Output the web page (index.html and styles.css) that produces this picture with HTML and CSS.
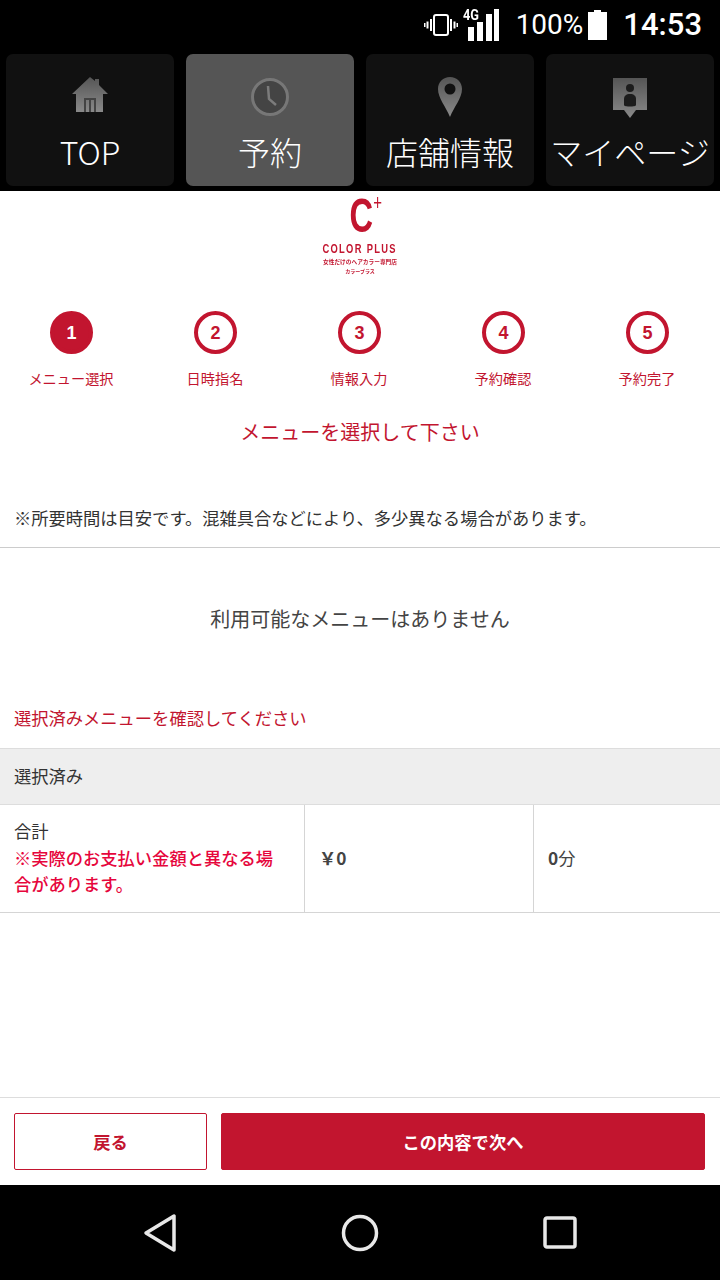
FILE: index.html
```html
<!DOCTYPE HTML>
<html lang="ja">
<head>
    <meta charset="utf-8">
    <title>メニュー選択</title>
    <link rel="stylesheet" href="styles.css">
</head>
<body>

<div class="status">
    <svg class="ic-vibrate" width="34" height="26" viewBox="0 0 34 26">
        <rect x="10" y="3" width="14" height="20" rx="2" fill="none" stroke="#fff" stroke-width="2"/>
        <path d="M7 7v12M3.500 9.500v7M0.500 11v4M27 7v12M30.500 9.500v7M33.500 11v4" stroke="#fff" stroke-width="2" fill="none"/>
    </svg>
    <span class="net">
        <span class="net-label">4G</span>
        <svg width="32" height="32" viewBox="0 0 32 32">
            <path d="M1 32h6V18H1zM10 32h6V13h-6zM19 32h6V5h-6zM27 32h5V0h-5z" fill="#fff"/>
        </svg>
    </span>
    <span class="battery-text">100%</span>
    <svg class="ic-battery" width="19" height="30" viewBox="0 0 19 30">
        <path d="M6 0h7v2h6v28H0V2h6z" fill="#fff"/>
    </svg>
    <span class="clock">14:53</span>
</div>

<nav class="tabs">
    <a class="tab">
        <svg width="38" height="42" viewBox="0 2 38 42">
            <defs>
                <linearGradient id="grey" x1="0" y1="0" x2="0" y2="1">
                    <stop offset="0" stop-color="#555"/>
                    <stop offset="1" stop-color="#8a8a8a"/>
                </linearGradient>
            </defs>
            <path d="M1 20L19 3l5 4V5h4v6l9 9H32v18H5V20z" fill="url(#grey)"/>
            <path d="M13 38V24h12v14h-2V26h-3v12h-2V26h-3v12z" fill="#444"/>
        </svg>
        <span>TOP</span>
    </a>
    <a class="tab is-active">
        <svg width="40" height="42" viewBox="0 0 40 42">
            <circle cx="20" cy="21" r="17.500" fill="#444" stroke="#777" stroke-width="3"/>
            <path d="M18 10l1 13 7 6" fill="none" stroke="#7c7c7c" stroke-width="2.500"/>
        </svg>
        <span>予約</span>
    </a>
    <a class="tab">
        <svg width="26" height="42" viewBox="0 0 26 42">
            <path d="M13 1c7 0 12 5 12 12 0 9-8 18-12 28C9 31 1 22 1 13 1 6 6 1 13 1z" fill="url(#grey)"/>
            <circle cx="13" cy="13" r="5.500" fill="#111"/>
        </svg>
        <span>店舗情報</span>
    </a>
    <a class="tab">
        <svg width="38" height="42" viewBox="0 -2 38 42">
            <path d="M2 0h34v32H25l-6 8-6-8H2z" fill="url(#grey)"/>
            <circle cx="19" cy="10" r="4" fill="#1c1c1c"/>
            <path d="M13 27v-6c0-3 2-5 6-5s6 2 6 5v6c0 2-12 2-12 0z" fill="#1c1c1c"/>
        </svg>
        <span>マイページ</span>
    </a>
</nav>

<main class="page">
    <div class="logo">
        <div class="logo-mark">C<sup>+</sup></div>
        <div class="logo-name">COLOR PLUS</div>
        <div class="logo-sub">女性だけのヘアカラー専門店</div>
        <div class="logo-sub logo-sub-small">カラープラス</div>
    </div>

    <ol class="steps">
        <li class="step is-current"><b>1</b><span>メニュー選択</span></li>
        <li class="step"><b>2</b><span>日時指名</span></li>
        <li class="step"><b>3</b><span>情報入力</span></li>
        <li class="step"><b>4</b><span>予約確認</span></li>
        <li class="step"><b>5</b><span>予約完了</span></li>
    </ol>

    <h1 class="title">メニューを選択して下さい</h1>
    <p class="notice">※所要時間は目安です。混雑具合などにより、多少異なる場合があります。</p>
    <p class="empty">利用可能なメニューはありません</p>
    <p class="confirm">選択済みメニューを確認してください</p>

    <h2 class="selected-head">選択済み</h2>
    <div class="total">
        <div class="total-label">合計<br><em>※実際のお支払い金額と異なる場合があります。</em></div>
        <div class="total-price"><b>￥0</b></div>
        <div class="total-time"><b>0</b>分</div>
    </div>

    <div class="actions">
        <a class="btn btn-back">戻る</a>
        <a class="btn btn-next">この内容で次へ</a>
    </div>
</main>

<div class="softkeys">
    <svg width="36" height="40" viewBox="0 0 36 40">
        <path d="M32 3v34L4 20z" fill="none" stroke="#e8e8e8" stroke-width="3.500" stroke-linejoin="round"/>
    </svg>
    <svg width="38" height="38" viewBox="0 0 38 38">
        <circle cx="19" cy="19" r="16.500" fill="none" stroke="#e8e8e8" stroke-width="3.500"/>
    </svg>
    <svg class="key-recent" width="34" height="33" viewBox="0 0 34 33">
        <rect x="2" y="2" width="30" height="29" rx="2" fill="none" stroke="#e8e8e8" stroke-width="3.500"/>
    </svg>
</div>

</body>
</html>
```

FILE: styles.css
```css
html, body {
    margin: 0;
    padding: 0;
    height: 100%;
}

body {
    display: flex;
    flex-direction: column;
    height: 1280px;
    overflow: hidden;
    background: #000;
    font-family: "Noto Sans CJK JP", "Noto Sans", sans-serif;
    color: #333;
}

/* status bar */
.status {
    height: 54px;
    box-sizing: border-box;
    padding-bottom: 5px;
    display: flex;
    align-items: center;
    justify-content: flex-end;
    padding-right: 18px;
    color: #fff;
    font-family: Roboto, sans-serif;
}
.ic-vibrate {
    margin-right: 5px;
}
.net {
    display: flex;
    align-items: flex-end;
    position: relative;
    width: 36px;
    height: 32px;
    justify-content: flex-end;
    margin-right: 17px;
}
.net-label {
    position: absolute;
    left: 0;
    top: -2px;
    font-size: 15px;
    font-weight: 700;
    line-height: 16px;
    transform: scaleX(0.85);
    transform-origin: left;
}
.battery-text {
    font-size: 28px;
    margin-right: 5px;
}
.ic-battery {
    margin-right: 16px;
}
.clock {
    font-size: 31px;
    font-weight: 500;
}

/* top tabs */
.tabs {
    height: 137px;
    display: flex;
    gap: 12px;
    padding: 0 6px;
    box-sizing: border-box;
}
.tab {
    flex: 1;
    height: 132px;
    background: #111;
    border-radius: 7px;
    display: flex;
    flex-direction: column;
    align-items: center;
    color: #fff;
    font-size: 32px;
    line-height: 40px;
    white-space: nowrap;
}
.tab svg {
    height: 42px;
    margin-top: 22px;
    overflow: visible;
    filter: blur(0.7px);
}
.tab span {
    margin-top: 13px;
    font-family: "Noto Sans CJK JP", sans-serif;
    font-weight: 300;
}
.tab.is-active {
    background: #555;
}

/* page */
.page {
    height: 994px;
    background: #fff;
    display: flex;
    flex-direction: column;
}

.logo {
    height: 96px;
    color: #c2152f;
    text-align: center;
    display: flex;
    flex-direction: column;
    align-items: center;
    filter: blur(0.3px);
}
.logo-mark {
    height: 50px;
    font-family: "Liberation Sans", sans-serif;
    font-weight: 700;
    font-size: 48px;
    line-height: 50px;
    transform: scaleX(0.68);
    margin-left: 12px;
}
.logo-mark sup {
    font-size: 22px;
    line-height: 0;
    vertical-align: 22px;
    font-weight: 400;
}
.logo-name {
    font-family: "Liberation Sans", sans-serif;
    font-weight: 700;
    font-size: 13px;
    line-height: 16px;
    letter-spacing: 1.800px;
    white-space: nowrap;
    transform: scaleX(0.72);
}
.logo-sub {
    font-size: 5.700px;
    line-height: 9px;
    font-weight: 700;
}
.logo-sub-small {
    font-size: 5px;
}

.steps {
    list-style: none;
    margin: 0 0 0 -1px;
    padding: 24px 0 0;
    display: flex;
}
.step {
    width: 144px;
    display: flex;
    flex-direction: column;
    align-items: center;
    color: #c2152f;
    font-size: 14.200px;
}
.step b {
    width: 43px;
    height: 43px;
    box-sizing: border-box;
    border: 4px solid #c2152f;
    border-radius: 50%;
    padding-left: 1px;
    display: flex;
    align-items: center;
    justify-content: center;
    font-family: "Liberation Sans", sans-serif;
    font-size: 18px;
    line-height: 1;
}
.step span {
    margin-top: 14px;
    line-height: 21px;
}
.step.is-current b {
    background: #c2152f;
    color: #fff;
}

.title {
    margin: 28px 0 0;
    font-size: 20px;
    font-weight: 400;
    line-height: 30px;
    text-align: center;
    color: #c2152f;
}

.notice {
    margin: 57px 0 0;
    padding: 0 14px 15px;
    font-size: 17.280px;
    line-height: 28px;
    border-bottom: 1px solid #ccc;
}

.empty {
    margin: 0;
    height: 156px;
    padding-top: 56px;
    box-sizing: border-box;
    text-align: center;
    font-size: 20px;
    line-height: 30px;
    color: #444;
}

.confirm {
    margin: 0;
    padding: 0 14px;
    height: 44px;
    font-size: 17.280px;
    line-height: 28px;
    color: #c2152f;
}

.selected-head {
    margin: 0;
    height: 57px;
    box-sizing: border-box;
    padding: 0 14px;
    background: #eee;
    border-top: 1px solid #ddd;
    border-bottom: 1px solid #ddd;
    font-size: 17.280px;
    font-weight: 400;
    line-height: 54px;
}

.total {
    display: flex;
    height: 108px;
    box-sizing: border-box;
    border-bottom: 1px solid #d5d5d5;
    font-size: 17.280px;
    line-height: 26.500px;
}
.total-label {
    width: 305px;
    box-sizing: border-box;
    padding: 13px 14px 0;
    border-right: 1px solid #d5d5d5;
}
.total-label em {
    font-style: normal;
    font-weight: 500;
    color: #e6063c;
}
.total-price,
.total-time {
    display: flex;
    align-items: center;
    padding-left: 14px;
    box-sizing: border-box;
    color: #444;
}
.total-price {
    width: 229px;
    border-right: 1px solid #d5d5d5;
}

.actions {
    margin-top: auto;
    height: 88px;
    box-sizing: border-box;
    padding: 15px 15px 15px 14px;
    border-top: 1px solid #ddd;
    display: flex;
    gap: 14px;
}
.btn {
    height: 57px;
    box-sizing: border-box;
    border: 1px solid #c2152f;
    border-radius: 2px;
    display: flex;
    align-items: center;
    justify-content: center;
    font-size: 17.280px;
    font-weight: 700;
}
.btn-back {
    width: 193px;
    color: #c2152f;
    background: #fff;
}
.btn-next {
    flex: 1;
    color: #fff;
    background: #c2152f;
}

/* android keys */
.softkeys {
    flex: 1;
    display: flex;
    align-items: center;
    padding-left: 142px;
    gap: 163px;
}
.key-recent {
    margin-left: 1px;
}
```
